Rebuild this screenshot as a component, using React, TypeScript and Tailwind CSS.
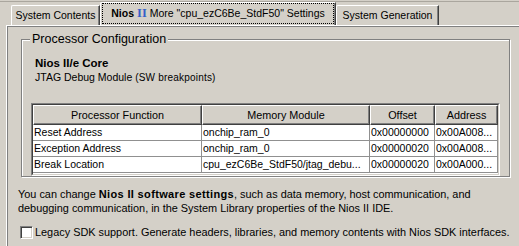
import React from "react";

const rows: string[][] = [
  ["Reset Address", "onchip_ram_0", "0x00000000", "0x00A008..."],
  ["Exception Address", "onchip_ram_0", "0x00000020", "0x00A008..."],
  ["Break Location", "cpu_ezC6Be_StdF50/jtag_debu...", "0x00000020", "0x00A000..."],
];
const headers = ["Processor Function", "Memory Module", "Offset", "Address"];
const widths = ["w-[169px]", "w-[168px]", "w-[65px]", "w-[63px]"];

export default function App() {
  return (
    <div className="w-[519px] h-[246px] overflow-hidden bg-[#d4d0c8] font-['Liberation_Sans',Arial,sans-serif] text-[10.5px] text-black flex flex-col">
      <div className="h-[1px] shrink-0" />
      <div className="h-[1px] shrink-0 bg-[#aaa69e]" />
      {/* tab strip */}
      <div className="flex items-end h-[23px] pl-[11px] shrink-0">
        <div className="h-[20px] w-[89px] flex items-center justify-center border-t border-l border-white rounded-tl-[2px] border-r border-r-[#404040] shadow-[inset_-1px_0_0_#808080] leading-none whitespace-nowrap">
          System Contents
        </div>
        <div className="relative z-10 h-[23px] w-[236px] flex border-t border-l border-white rounded-tl-[2px] border-r border-r-[#404040] shadow-[inset_-1px_0_0_#808080] px-[1px] pb-[1px] whitespace-nowrap">
          <div className="flex-1 border border-dotted border-black flex items-center justify-center leading-none">
            <span className="font-bold">Nios</span>
            <span className="ml-[3px] font-['Liberation_Serif',serif] font-bold text-[12.5px] text-[#3560c8]">II</span>
            <span className="ml-[3px]">More "cpu_ezC6Be_StdF50" Settings</span>
          </div>
        </div>
        <div className="h-[20px] w-[103px] flex items-center justify-center border-t border-l border-white rounded-tl-[2px] border-r border-r-[#404040] shadow-[inset_-1px_0_0_#808080] leading-none whitespace-nowrap">
          System Generation
        </div>
      </div>

      {/* panel */}
      <div className="ml-[6px] flex-1 border-t border-l border-white shadow-[inset_1px_1px_0_#808080]">
        <fieldset className="ml-[14px] mt-[6px] w-[483px] border border-[#808080] shadow-[inset_1px_1px_0_#ffffff,1px_1px_0_#ffffff]">
          <legend className="ml-[8px] px-[2px] bg-[#d4d0c8] text-[12.5px] leading-[14px]">
            Processor Configuration
          </legend>
          <div className="px-[9px]">
            <div className="pl-[4px] mt-[10px] h-[14px] leading-[14px] font-bold text-[11.5px]">Nios II/e Core</div>
            <div className="pl-[4px] h-[14px] leading-[14px] whitespace-nowrap">
              JTAG Debug Module <span className="text-[10px] tracking-[0.2px]">(SW breakpoints)</span>
            </div>
            <div className="mt-[19px] w-[469px] border-t border-l border-[#808080] border-r border-b border-r-white border-b-white">
              <div className="h-[71px] bg-white border-t border-l border-[#404040] border-r border-b border-r-[#d4d0c8] border-b-[#d4d0c8]">
                <div className="flex h-[20px]">
                  {headers.map((h, i) => (
                    <div
                      key={h}
                      className={`${widths[i]} shrink-0 h-[20px] flex items-center justify-center bg-[#d4d0c8] border-t border-l border-white border-r border-b border-r-[#404040] border-b-[#404040] shadow-[inset_-1px_-1px_0_#808080] text-[10.8px] leading-none whitespace-nowrap`}
                    >
                      {h}
                    </div>
                  ))}
                </div>
                {rows.map((r, ri) => (
                  <div key={ri} className="flex h-[16px]">
                    {r.map((c, ci) => (
                      <div
                        key={ci}
                        className={`${widths[ci]} shrink-0 h-[16px] border-r border-b border-[#909090] pl-[1px] leading-[15px] whitespace-nowrap overflow-hidden`}
                      >
                        {c}
                      </div>
                    ))}
                  </div>
                ))}
              </div>
            </div>
          </div>
        </fieldset>

        <div className="pl-[11px] mt-[10px] leading-[14px] text-[10.9px] whitespace-nowrap">
          You can change <span className="font-bold text-[11px] tracking-[0.35px]">Nios II software settings</span>, such as data memory, host communication, and
          <br />
          debugging communication, in the System Library properties of the Nios II IDE.
        </div>

        <div className="pl-[13px] mt-[10px] h-[14px] flex items-center gap-[2px] whitespace-nowrap">
          <span className="w-[13px] h-[13px] shrink-0 bg-white border-t border-l border-[#808080] border-r border-b border-r-white border-b-white shadow-[inset_1px_1px_0_#404040,inset_-1px_-1px_0_#d4d0c8]" />
          <span className="leading-[14px] text-[10.9px]">
            Legacy SDK support. Generate headers, libraries, and memory contents with Nios SDK interfaces.
          </span>
        </div>
      </div>
    </div>
  );
}
